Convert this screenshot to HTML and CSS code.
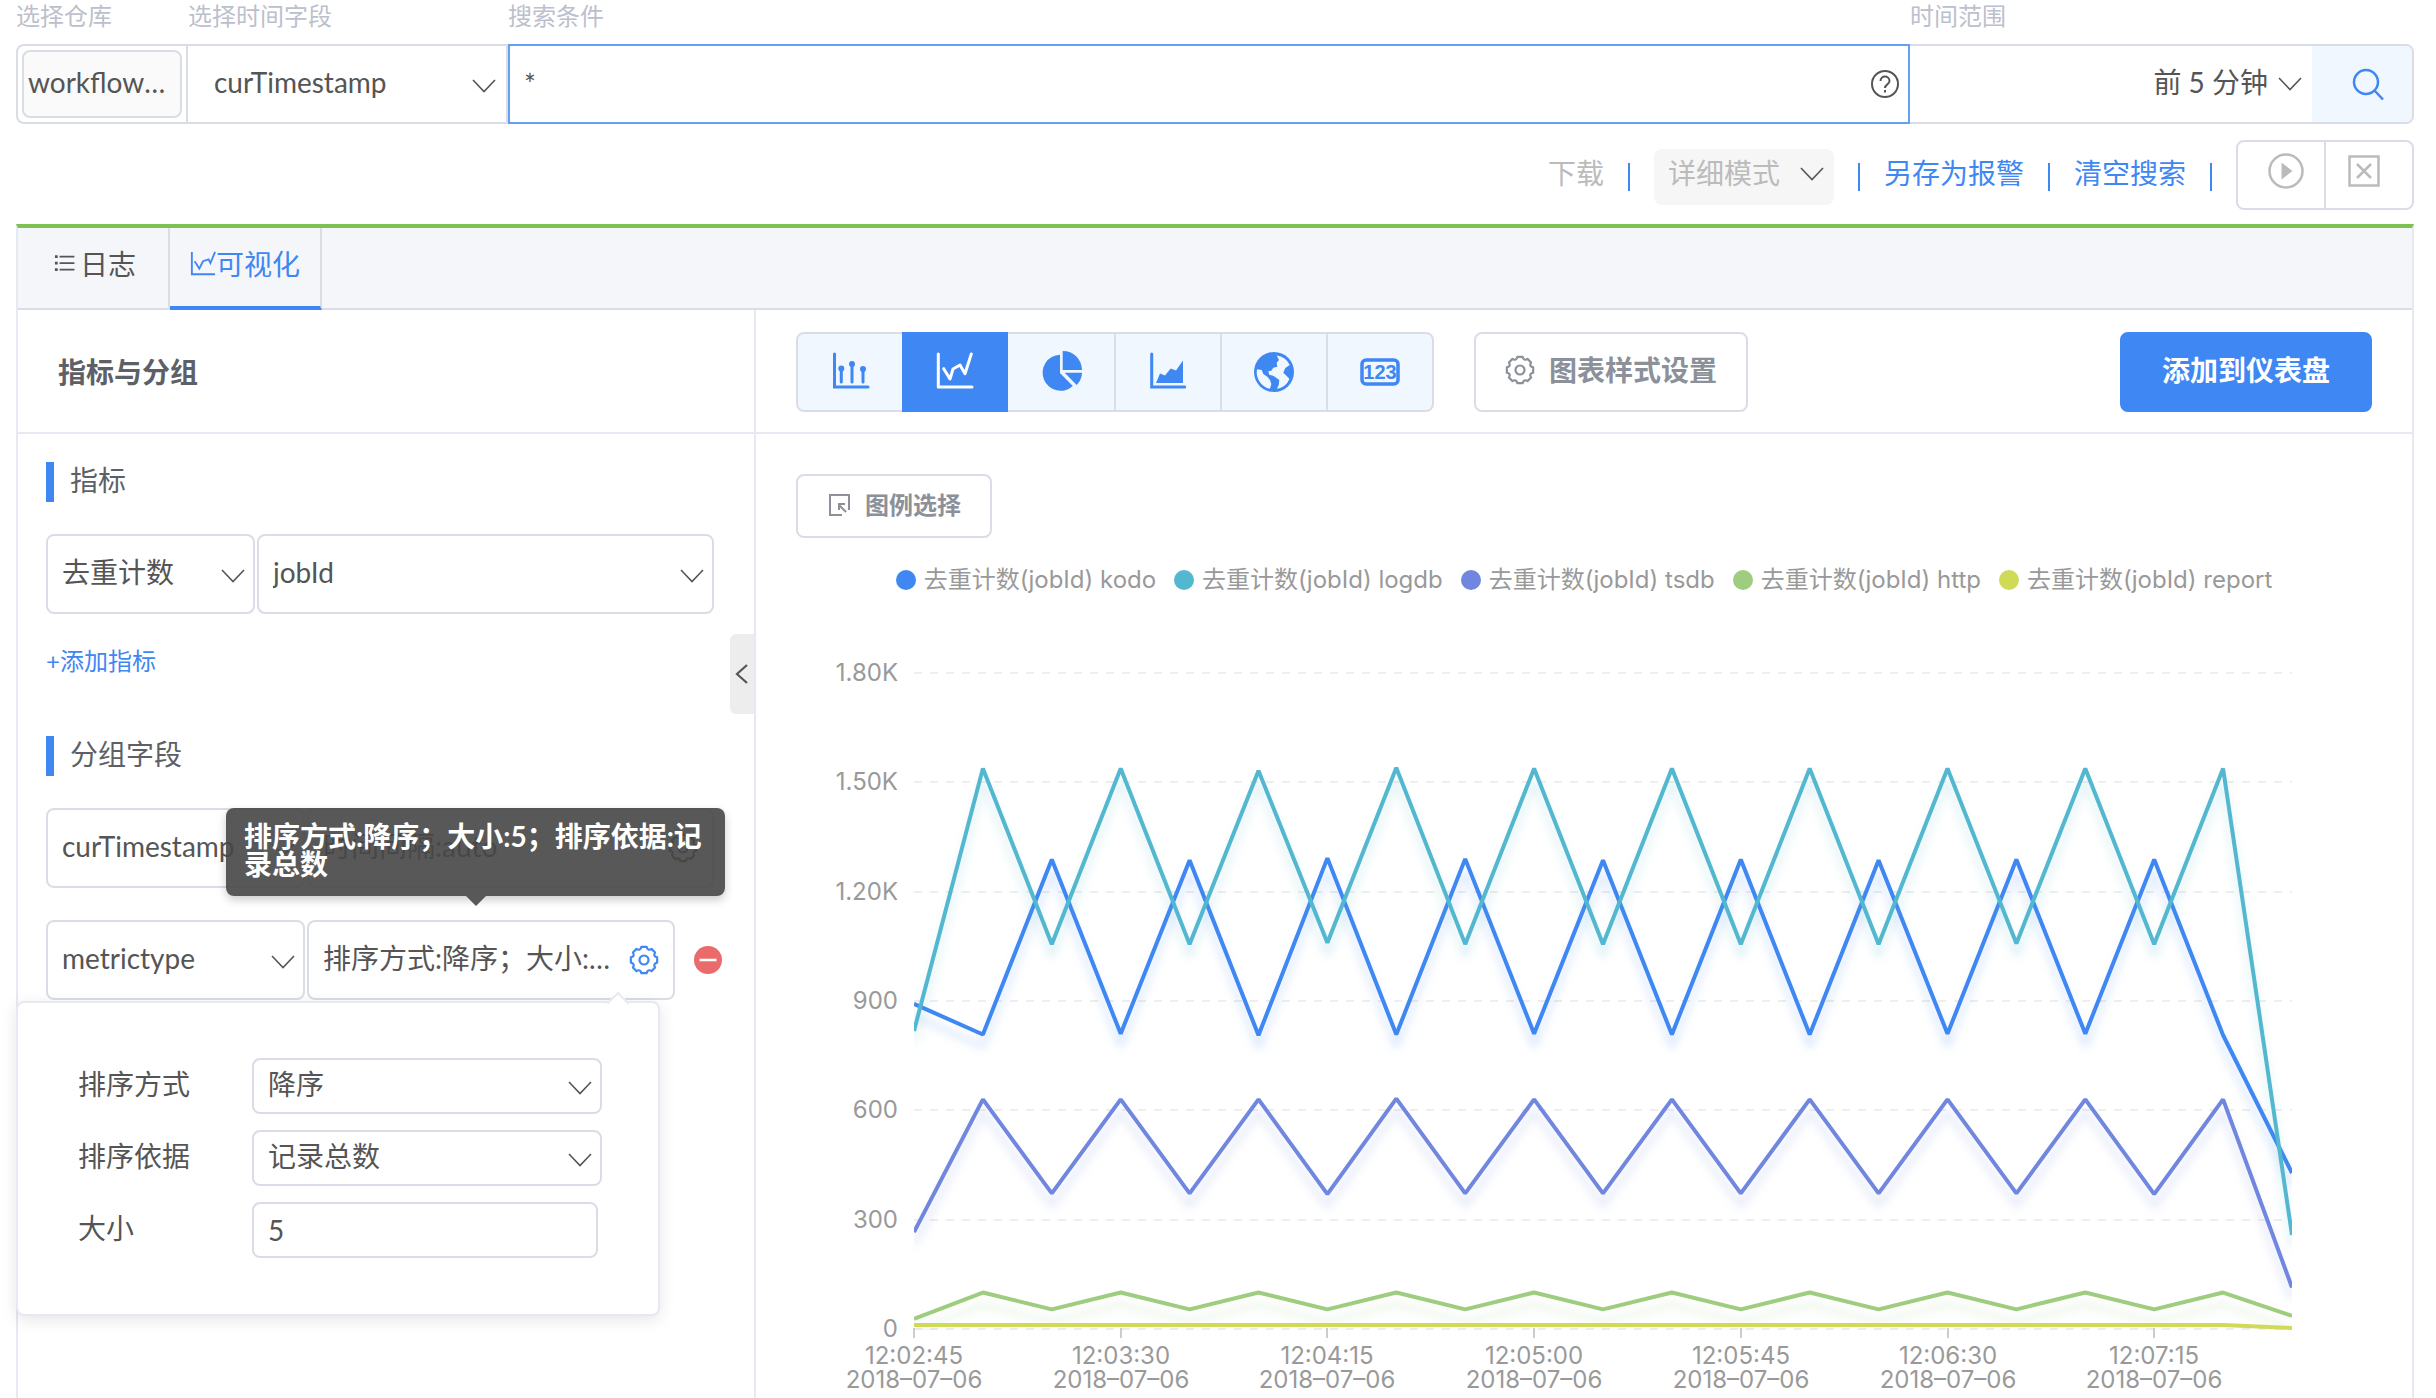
FILE: index.html
```html
<!doctype html>
<html lang="zh-CN">
  <head>
    <meta charset="utf-8">
    <title>日志检索</title>
    <link rel="stylesheet" href="styles.css">
  </head>
  <body>
    <svg class="sprite" aria-hidden="true">
      <symbol id="chevron" viewBox="0 0 24 14">
        <path d="M1 1l11 11.500L23 1" fill="none" stroke="currentColor" stroke-width="1.600"/>
      </symbol>
      <symbol id="gear" viewBox="-15 -15 30 30">
        <path d="M-2.600-13.150L2.600-13.150Q3.600-8.700 7.500-11.100L11.100-7.500Q8.700-3.600 13.150-2.600L13.150 2.600Q8.700 3.600 11.100 7.500L7.500 11.100Q3.600 8.700 2.600 13.150L-2.600 13.150Q-3.600 8.700-7.500 11.100L-11.100 7.500Q-8.700 3.600-13.150 2.600L-13.150-2.600Q-8.700-3.600-11.100-7.500L-7.500-11.100Q-3.600-8.700-2.600-13.150Z" fill="none" stroke="currentColor" stroke-width="2.200" stroke-linejoin="round"/>
        <circle r="4.500" fill="none" stroke="currentColor" stroke-width="2.200"/>
      </symbol>
    </svg>

    <form class="query">
      <div class="query-field">
        <label for="repo">选择仓库</label>
        <div class="query-control repo-box">
          <input class="repo" id="repo" type="text" value="workflow_monitor" readonly>
        </div>
      </div>
      <div class="query-field">
        <label for="time-field">选择时间字段</label>
        <div class="query-control select">
          <select id="time-field"><option>curTimestamp</option></select>
          <svg class="chevron"><use href="#chevron"/></svg>
        </div>
      </div>
      <div class="query-field">
        <label for="search">搜索条件</label>
        <div class="query-control search-box">
          <input id="search" type="text" value="*">
          <svg class="help" viewBox="0 0 30 30" fill="none" stroke="currentColor" stroke-width="2">
            <circle cx="15" cy="15" r="13"/>
            <path d="M10.500 12c0-6 9-6 9 0 0 3.500-4.500 3.200-4.500 7M15 21v2.500"/>
          </svg>
        </div>
      </div>
      <div class="query-field">
        <label for="range">时间范围</label>
        <div class="query-control range-box">
          <div class="select range">
            <select id="range"><option>前 5 分钟</option></select>
            <svg class="chevron"><use href="#chevron"/></svg>
          </div>
          <button class="search-btn" type="button" aria-label="搜索">
            <svg viewBox="0 0 32 32" fill="none" stroke="currentColor" stroke-width="2.500">
              <circle cx="14" cy="14" r="12"/>
              <path d="M22.500 22.500l8.500 9"/>
            </svg>
          </button>
        </div>
      </div>
    </form>

    <div class="toolbar">
      <div class="toolbar-links">
        <button class="link" type="button" disabled>下载</button>
        <span class="bar"></span>
        <div class="select mode">
          <select aria-label="模式" disabled><option>详细模式</option></select>
          <svg class="chevron"><use href="#chevron"/></svg>
        </div>
        <span class="bar"></span>
        <button class="link" type="button">另存为报警</button>
        <span class="bar"></span>
        <button class="link" type="button">清空搜索</button>
        <span class="bar"></span>
      </div>
      <div class="run-group">
        <button type="button" aria-label="运行">
          <svg viewBox="0 0 38 38" fill="none" stroke="currentColor" stroke-width="2.500">
            <circle cx="19" cy="19" r="16.500"/>
            <path d="M14.500 10.500v17L25.500 19z" fill="currentColor" stroke="none"/>
          </svg>
        </button>
        <button type="button" aria-label="关闭">
          <svg viewBox="0 0 38 38" fill="none" stroke="currentColor" stroke-width="2.500">
            <rect x="4.500" y="4.500" width="29" height="29"/>
            <path d="M12 12l14 14M26 12L12 26"/>
          </svg>
        </button>
      </div>
    </div>

    <main class="panel">
      <nav class="tabs">
        <a class="tab tab-log" href="#log">
          <svg viewBox="0 0 28 26" fill="none" stroke="currentColor" stroke-width="2">
            <path d="M6 5h16M6 12h16M6 19h16"/>
            <path d="M1 5h3M1 12h3M1 19h3" stroke-width="3"/>
          </svg>日志
        </a>
        <a class="tab active" href="#chart">
          <svg viewBox="0 0 28 26" fill="none" stroke="currentColor" stroke-width="2">
            <path d="M2 0v24h25M5 10l5 8 4-8 6-2 2 4 5-12"/>
          </svg>可视化
        </a>
      </nav>

      <div class="content">
        <aside class="sidebar">
          <h2 class="head">指标与分组</h2>
          <section class="group">
            <h3>指标</h3>
            <div class="row">
              <div class="box select w-sm">
                <select aria-label="指标类型"><option>去重计数</option></select>
                <svg class="chevron"><use href="#chevron"/></svg>
              </div>
              <div class="box select grow">
                <select aria-label="指标字段"><option>jobId</option></select>
                <svg class="chevron"><use href="#chevron"/></svg>
              </div>
            </div>
            <button class="add" type="button">+添加指标</button>
          </section>

          <section class="group">
            <h3>分组字段</h3>
            <div class="row">
              <div class="box select w-md">
                <select aria-label="分组字段"><option>curTimestamp</option></select>
                <svg class="chevron"><use href="#chevron"/></svg>
              </div>
              <div class="box setting grow">
                <input type="text" aria-label="时间间隔" value="时间间隔:auto" readonly>
                <svg class="gear"><use href="#gear"/></svg>
              </div>
            </div>
            <div class="row">
              <div class="box select w-md">
                <select aria-label="分组字段"><option>metrictype</option></select>
                <svg class="chevron"><use href="#chevron"/></svg>
              </div>
              <div class="box setting grow">
                <input type="text" aria-label="排序设置" value="排序方式:降序；大小:5；排序依据:记录总数" readonly>
                <svg class="gear on"><use href="#gear"/></svg>
              </div>
              <button class="remove" type="button" aria-label="删除">
                <svg viewBox="0 0 28 28">
                  <circle cx="14" cy="14" r="14" fill="#ea6b6b"/>
                  <path d="M5.500 14h17" stroke="#fff" stroke-width="2.500"/>
                </svg>
              </button>
              <div class="tooltip" role="tooltip">排序方式:降序；大小:5；排序依据:记录总数</div>
              <div class="popover">
                <label for="order">排序方式</label>
                <div class="box select">
                  <select id="order"><option>降序</option></select>
                  <svg class="chevron"><use href="#chevron"/></svg>
                </div>
                <label for="order-by">排序依据</label>
                <div class="box select">
                  <select id="order-by"><option>记录总数</option></select>
                  <svg class="chevron"><use href="#chevron"/></svg>
                </div>
                <label for="size">大小</label>
                <input class="box size" id="size" type="text" value="5">
              </div>
            </div>
          </section>
          <button class="collapse" type="button" aria-label="收起">
            <svg viewBox="0 0 14 20"><path d="M12 1L2 10l10 9" fill="none" stroke="currentColor" stroke-width="2.200"/></svg>
          </button>
        </aside>

        <section class="main">
          <div class="head">
            <div class="types">
              <button type="button" aria-label="柱状图">
                <svg viewBox="0 0 40 40" fill="none" stroke="currentColor" stroke-width="3" stroke-linecap="round">
                  <path d="M4.500 2v33H38M11.300 17v13M22 13v17M33 17v13"/>
                  <g fill="currentColor" stroke="none"><circle cx="11.300" cy="16.600" r="3"/><circle cx="22" cy="12" r="3"/><circle cx="33" cy="17" r="3"/></g>
                </svg>
              </button>
              <button class="active" type="button" aria-label="折线图">
                <svg viewBox="0 0 40 40" fill="none" stroke="currentColor" stroke-width="3" stroke-linecap="round" stroke-linejoin="round">
                  <path d="M3.300 2v33H37M8.700 16.700L15 27l3-10 7-4 5 8.700L36.300 2"/>
                </svg>
              </button>
              <button type="button" aria-label="饼图">
                <svg viewBox="0 0 40 40" fill="currentColor">
                  <path d="M18 2.800A18 18 0 1 0 30.800 34L18 21z"/>
                  <path d="M20.700-1A19 19 0 0 1 40 18H20.700z"/>
                  <path d="M22.700 20.700H40A18 18 0 0 1 34.700 33z"/>
                </svg>
              </button>
              <button type="button" aria-label="面积图">
                <svg viewBox="0 0 40 40" fill="none" stroke="currentColor" stroke-width="3" stroke-linecap="round">
                  <path d="M3.700 2v33h33"/>
                  <path d="M8 31l4-9.500 5 2 5.700-7 5.300 2 7-10V31z" fill="currentColor" stroke="none"/>
                </svg>
              </button>
              <button type="button" aria-label="地图">
                <svg viewBox="0 0 40 40">
                  <circle cx="20" cy="20" r="20" fill="currentColor"/>
                  <g fill="#f0f7ff">
                    <path d="M3 17.300l4.700.700 1.600 4 4 2.700L16 28l1.300 4-1.300 4.800A17 17 0 0 1 3 17.300z"/>
                    <path d="M22.700 3.500L25 8l-2.300 2.700.6 4-4 1-2 3-3 .6 1 3.400 4 1 6 4.300-.6 5-1.700 3.800A17 17 0 0 0 35.500 27l-2.800-3-3.400-3.300 2-4.700 4.500-3A17 17 0 0 0 22.700 3.500z"/>
                  </g>
                </svg>
              </button>
              <button type="button" aria-label="数值">
                <svg viewBox="0 0 40 40">
                  <rect x="2" y="8" width="36" height="24" rx="4" fill="none" stroke="currentColor" stroke-width="3.500"/>
                  <text class="num" x="20" y="27" text-anchor="middle">123</text>
                </svg>
              </button>
            </div>
            <button class="btn" type="button"><svg class="gear"><use href="#gear"/></svg>图表样式设置</button>
            <button class="btn primary" type="button">添加到仪表盘</button>
          </div>

          <div class="chart">
            <button class="btn small" type="button">
              <svg class="pick" viewBox="0 0 24 24" fill="none" stroke="currentColor" stroke-width="2">
                <path d="M15 22H3V2h19v15"/>
                <path d="M19 19l-7-7M12 17v-6h6"/>
              </svg>图例选择
            </button>
            <ul class="legend">
              <li><i class="dot kodo"></i>去重计数(jobId) kodo</li>
              <li><i class="dot logdb"></i>去重计数(jobId) logdb</li>
              <li><i class="dot tsdb"></i>去重计数(jobId) tsdb</li>
              <li><i class="dot http"></i>去重计数(jobId) http</li>
              <li><i class="dot report"></i>去重计数(jobId) report</li>
            </ul>
            <svg class="plot" id="plot" viewBox="0 0 1576 760"></svg>
          </div>
        </section>
      </div>
    </main>
    <script src="chart.js"></script>
  </body>
</html>
```
FILE: styles.css
```css
* {
  box-sizing: border-box;
}

body {
  background: #fff;
  color: #555;
  display: flex;
  flex-direction: column;
  font-family: Lato, "Noto Sans CJK SC", sans-serif;
  font-size: 28px;
  line-height: 40px;
  margin: 0;
  min-height: 100vh;
  padding: 0 22px 0 16px;
}

button,
input,
select {
  background: none;
  border: 0;
  color: inherit;
  font: inherit;
  margin: 0;
  min-width: 0;
  outline: 0;
  padding: 0;
}

button {
  align-items: center;
  display: flex;
  justify-content: center;
}

select {
  appearance: none;
  opacity: 1;
}

.sprite {
  height: 0;
  position: absolute;
  width: 0;
}

.select {
  align-items: center;
  display: grid;
}

.select > * {
  grid-area: 1 / 1;
}

.select select {
  height: 100%;
  padding-bottom: 4px;
  width: 100%;
}

.chevron {
  height: 14px;
  justify-self: end;
  pointer-events: none;
  width: 24px;
}

/* query bar */

.query {
  display: grid;
  grid-template-columns: 172px 320px 1fr 504px;
}

.query-field {
  display: flex;
  flex-direction: column;
  min-width: 0;
}

.query-field label {
  color: #bcc0cc;
  font-size: 24px;
  line-height: 32px;
  margin-bottom: 12px;
}

.query-control {
  border: 2px solid #dadde6;
  border-left: 0;
  height: 80px;
}

.query-control select {
  padding-left: 26px;
}

.query-control .chevron {
  margin: 4px 10px 0 0;
}

.repo-box {
  border-left: 2px solid #dadde6;
  border-radius: 8px 0 0 8px;
  padding: 4px;
}

.repo {
  background: #fafafa;
  border: 2px solid #dadde6;
  border-radius: 8px;
  height: 68px;
  padding: 0 2px 4px 4px;
  text-overflow: ellipsis;
  width: 100%;
}

.search-box {
  align-items: center;
  border: 2px solid #629ff5;
  display: flex;
  padding: 0 8px 0 14px;
}

.search-box input {
  flex: 1;
}

.help {
  height: 30px;
  width: 30px;
}

.range-box {
  border-radius: 0 8px 8px 0;
  display: flex;
  overflow: hidden;
}

.range {
  flex: 1;
}

.range select {
  padding-right: 44px;
  text-align: right;
  text-align-last: right;
}

.range .chevron {
  margin: 0 10px 0 0;
}

.search-btn {
  background: #f0f7ff;
  color: #3f87f2;
  padding-left: 12px;
  width: 100px;
}

.search-btn svg {
  height: 32px;
  width: 32px;
}

/* toolbar */

.toolbar {
  display: flex;
  gap: 24px;
  height: 70px;
  justify-content: flex-end;
  margin: 16px 0 14px;
}

.toolbar-links {
  align-items: center;
  display: flex;
  gap: 24px;
  padding-top: 4px;
}

.link {
  color: #3f87f2;
  padding-bottom: 8px;
}

.link:disabled {
  color: #bbb;
}

.bar {
  background: #3f87f2;
  height: 28px;
  width: 2px;
}

.mode {
  background: #f6f6f6;
  border-radius: 8px;
  height: 56px;
  width: 180px;
}

.mode select {
  color: #bbb;
  padding: 0 0 8px 14px;
}

.mode .chevron {
  margin: 0 10px 6px 0;
}

.run-group {
  border: 2px solid #dadde6;
  border-radius: 8px;
  display: flex;
  width: 178px;
}

.run-group button {
  color: #bbb;
  flex: 1;
  padding: 0 0 8px 10px;
}

.run-group button + button {
  border-left: 2px solid #dadde6;
  padding: 0 10px 8px 0;
}

.run-group svg {
  height: 38px;
  width: 38px;
}

/* panel */

.panel {
  border: 2px solid #e6e9f1;
  border-bottom: 0;
  border-top: 4px solid #7cc152;
  display: flex;
  flex: 1;
  flex-direction: column;
}

.tabs {
  background: #f5f6fa;
  border-bottom: 2px solid #dadde3;
  display: flex;
  height: 82px;
}

.tab {
  align-items: center;
  border-bottom: 4px solid transparent;
  border-right: 2px solid #dadde3;
  color: inherit;
  display: flex;
  margin-bottom: -2px;
  padding: 0 20px 6px;
  text-decoration: none;
}

.tab svg {
  height: 26px;
  width: 26px;
}

.tab-log {
  padding: 0 32px 6px 36px;
}

.tab.active {
  border-bottom-color: #3f87f2;
  color: #3f87f2;
}

.content {
  display: flex;
  flex: 1;
}

.head {
  align-items: center;
  border-bottom: 2px solid #e6e9f1;
  display: flex;
  height: 124px;
  margin: 0;
}

/* sidebar */

.sidebar {
  border-right: 2px solid #e6e9f1;
  flex: none;
  position: relative;
  width: 738px;
}

h2.head {
  color: #5d6066;
  font-size: 28px;
  padding: 2px 0 0 40px;
}

.group {
  padding: 28px 40px 0 28px;
}

.group + .group {
  padding-top: 60px;
}

h3 {
  border-left: 8px solid #3f87f2;
  color: #5d6066;
  font-size: 28px;
  font-weight: 400;
  line-height: 36px;
  margin: 0 0 32px;
  padding: 0 0 4px 16px;
}

.row {
  align-items: center;
  display: flex;
  gap: 2px;
  margin-bottom: 32px;
  position: relative;
}

.box {
  border: 2px solid #dadde6;
  border-radius: 8px;
  height: 80px;
}

.box select,
input.box {
  padding-left: 14px;
}

.box .chevron {
  margin: 4px 8px 0 0;
}

.w-sm {
  width: 209px;
}

.w-md {
  width: 259px;
}

.grow {
  flex: 1;
  min-width: 0;
}

.setting {
  align-items: center;
  display: flex;
  gap: 8px;
  padding: 0 14px;
}

.setting input {
  flex: 1;
  padding-bottom: 4px;
  text-overflow: ellipsis;
}

.gear {
  flex: none;
  height: 30px;
  width: 30px;
}

.gear.on {
  color: #3f87f2;
}

.remove {
  margin: 0 -8px 0 17px;
}

.remove svg {
  height: 28px;
  width: 28px;
}

.add {
  color: #3f87f2;
  font-size: 24px;
  line-height: 30px;
}

.collapse {
  background: #ededed;
  border-radius: 6px 0 0 6px;
  height: 80px;
  position: absolute;
  right: 0;
  top: 324px;
  width: 24px;
}

.collapse svg {
  height: 20px;
  width: 14px;
}

.tooltip {
  background: rgba(70, 70, 70, .9);
  border-radius: 8px;
  bottom: 104px;
  box-shadow: 0 4px 10px rgba(0, 0, 0, .2);
  color: #fff;
  font-weight: 700;
  height: 88px;
  left: 180px;
  line-height: 28px;
  padding: 14px 18px;
  position: absolute;
  width: 499px;
  z-index: 2;
}

.tooltip::after {
  border: 10px solid transparent;
  border-bottom: 0;
  border-top-color: #585858;
  content: "";
  left: 240px;
  position: absolute;
  top: 88px;
}

.popover {
  align-items: center;
  background: #fff;
  border: 2px solid #e6e9f1;
  border-radius: 8px;
  box-shadow: 0 4px 16px rgba(0, 0, 0, .1);
  display: grid;
  gap: 16px 0;
  grid-template-columns: 174px 350px;
  left: -30px;
  padding: 55px 56px 56px 60px;
  position: absolute;
  top: 81px;
  width: 644px;
  z-index: 1;
}

.popover::before {
  background: #fff;
  border-left: 2px solid #e6e9f1;
  border-top: 2px solid #e6e9f1;
  content: "";
  height: 14px;
  position: absolute;
  right: 32px;
  top: -8px;
  transform: rotate(45deg);
  width: 14px;
}

.popover label {
  padding-bottom: 4px;
}

.popover .box {
  height: 56px;
}

.popover .size {
  margin-right: 4px;
}

/* chart area */

.main {
  display: flex;
  flex: 1;
  flex-direction: column;
  min-width: 0;
}

.main .head {
  padding: 2px 40px 0;
}

.types {
  background: #f0f7ff;
  border: 2px solid #dadde6;
  border-radius: 8px;
  color: #3f87f2;
  display: flex;
  height: 80px;
  margin-right: 40px;
}

.types button {
  width: 106px;
}

.types button:first-child {
  width: 104px;
}

.types button + button {
  border-left: 2px solid #dadde6;
}

.types .active {
  background: #3f87f2;
  border: 0;
  color: #fff;
  margin: -2px 0;
}

.types .active + button {
  border-left-color: transparent;
}

.types svg {
  height: 40px;
  overflow: visible;
  width: 40px;
}

.num {
  fill: currentColor;
  font: bold 20px "Liberation Sans Narrow", "Liberation Sans", sans-serif;
}

.btn {
  border: 2px solid #dadde6;
  border-radius: 8px;
  color: #8b9099;
  font-weight: 700;
  gap: 14px;
  height: 80px;
  padding: 0 29px 4px;
}

.primary {
  background: #3f87f2;
  border-color: #3f87f2;
  color: #fff;
  margin-left: auto;
  padding: 0 40px 4px;
}

.small {
  font-size: 24px;
  height: 64px;
  padding: 0 29px 2px;
}

.pick {
  height: 24px;
  width: 24px;
}

.chart {
  padding: 40px 40px 0;
}

.legend {
  color: #999;
  display: flex;
  font-family: Inter, "Noto Sans CJK SC", sans-serif;
  font-size: 24px;
  gap: 18px;
  justify-content: center;
  line-height: 32px;
  list-style: none;
  margin: 26px 0 0;
  padding: 0;
}

.legend li {
  align-items: center;
  display: flex;
  gap: 8px;
}

.dot {
  border-radius: 50%;
  height: 20px;
  width: 20px;
}

.kodo { background: #3f87f2; }
.logdb { background: #53b8cf; }
.tsdb { background: #7186de; }
.http { background: #9fcd80; }
.report { background: #cfda57; }

.plot {
  display: block;
  margin-top: 44px;
  width: 100%;
}

.plot text {
  fill: #999;
  font-family: Inter, sans-serif;
  font-size: 24px;
}
```
FILE: chart.js
```js
const plot = document.getElementById('plot');

const left = 118;
const right = 1496;
const bottom = 689;
const top_ = 33;
const max = 1800;

const times = ['12:02:45', '12:03:30', '12:04:15', '12:05:00', '12:05:45', '12:06:30', '12:07:15'];
const series = [
  { color: '#3f87f2', data: [892, 808, 1288, 810, 1286, 806, 1292, 808, 1290, 810, 1286, 808, 1288, 808, 1286, 810, 1288, 810, 1288, 806, 428] },
  { color: '#53b8cf', data: [818, 1538, 1056, 1538, 1056, 1532, 1060, 1540, 1056, 1538, 1056, 1538, 1056, 1538, 1056, 1538, 1058, 1538, 1056, 1538, 258] },
  { color: '#7186de', data: [266, 630, 372, 630, 372, 630, 370, 632, 372, 630, 372, 630, 372, 630, 372, 630, 372, 630, 370, 630, 114] },
  { color: '#9fcd80', data: [28, 100, 54, 100, 54, 100, 54, 100, 54, 100, 54, 100, 54, 100, 54, 100, 54, 100, 54, 100, 36] },
  { color: '#cfda57', data: [11, 11, 11, 11, 11, 11, 11, 11, 11, 11, 11, 11, 11, 11, 11, 11, 11, 11, 11, 11, 3] }
];

const step = (right - left) / (series[0].data.length - 1);
const y = v => bottom - v * (bottom - top_) / max;

function add(parent, name, attrs, text) {
  const node = document.createElementNS('http://www.w3.org/2000/svg', name);
  for (const key in attrs) { node.setAttribute(key, attrs[key]); }
  if (text) { node.textContent = text; }
  parent.appendChild(node);
  return node;
}

// grid and y axis
for (let v = 0; v <= max; v += 300) {
  const label = v > 1000 ? `${(v / 1000).toFixed(2)}K` : `${v}`;
  add(plot, 'path', { d: `M${left} ${Math.round(y(v))}H${right}`, stroke: '#eee', 'stroke-width': 2, 'stroke-dasharray': '8 8' });
  add(plot, 'text', { x: left - 16, y: Math.round(y(v)) + 8, 'text-anchor': 'end' }, label);
}

// x axis, one label every three points
times.forEach((time, i) => {
  const x = Math.round(left + i * 3 * step);
  add(plot, 'path', { d: `M${x} ${bottom - 1}v10`, stroke: '#ccc', 'stroke-width': 2 });
  const label = add(plot, 'text', { y: 724, 'text-anchor': 'middle' });
  add(label, 'tspan', { x }, time);
  add(label, 'tspan', { x, dy: 24 }, '2018–07–06');
});

const clip = add(plot, 'clipPath', { id: 'area' });
add(clip, 'rect', { x: left, y: 0, width: right - left, height: bottom + 1 });
const lines = add(plot, 'g', { 'clip-path': 'url(#area)' });

series.forEach(s => {
  const points = s.data.map((v, i) => `${left + i * step},${y(v)}`).join(' ');
  const line = add(lines, 'polyline', { points, fill: 'none', stroke: s.color, 'stroke-width': 4, 'stroke-linejoin': 'bevel' });
  line.style.filter = `drop-shadow(0 12px 5px ${s.color}40)`;
});
```
